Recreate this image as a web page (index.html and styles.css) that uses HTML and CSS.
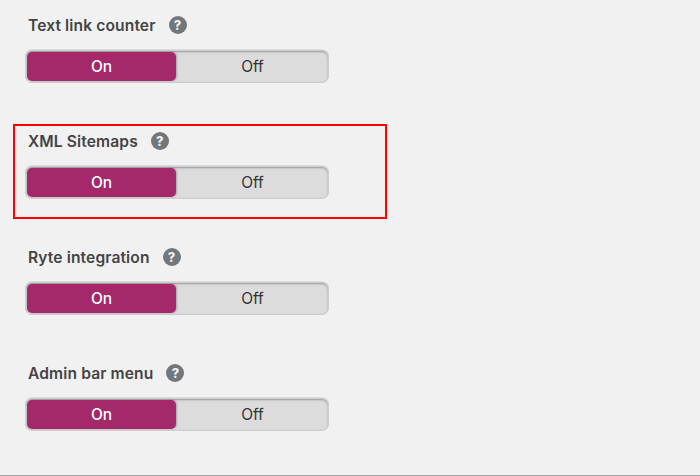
FILE: index.html
```html
<!DOCTYPE html>
<html lang="en">
<head>
  <meta charset="UTF-8" />
  <title>Features</title>
  <link rel="stylesheet" href="styles.css">
</head>
<body>
  <div class="features">
    <div class="feature">
      <div class="label">Text link counter <span class="help">?</span></div>
      <div class="toggle"><span class="opt on">On</span><span class="opt">Off</span></div>
    </div>
    <div class="feature highlighted">
      <div class="label">XML Sitemaps <span class="help">?</span></div>
      <div class="toggle"><span class="opt on">On</span><span class="opt">Off</span></div>
    </div>
    <div class="feature">
      <div class="label">Ryte integration <span class="help">?</span></div>
      <div class="toggle"><span class="opt on">On</span><span class="opt">Off</span></div>
    </div>
    <div class="feature">
      <div class="label">Admin bar menu <span class="help">?</span></div>
      <div class="toggle"><span class="opt on">On</span><span class="opt">Off</span></div>
    </div>
  </div>
</body>
</html>
```

FILE: styles.css
```css
html, body {
  height: 100%;
}
body {
  margin: 0;
  overflow: hidden;
  box-sizing: border-box;
  border-bottom: 1px solid #a6a6a6;
  background-color: #f1f1f1;
  font-family: Inter, "Liberation Sans", sans-serif;
  color: #444;
}
.features {
  padding: 15px 0 0 25px;
}
.feature {
  position: relative;
  height: 116px;
}
.highlighted::after {
  content: "";
  position: absolute;
  left: -12px;
  top: -7px;
  width: 370px;
  height: 91px;
  border: 2px solid #f00;
}
.label {
  display: flex;
  align-items: center;
  height: 20px;
  margin: 0 0 15px 3px;
  font-size: 15.6px;
  font-weight: 600;
  letter-spacing: 0.12px;
  white-space: pre;
}
.help {
  display: flex;
  align-items: center;
  justify-content: center;
  width: 18px;
  height: 18px;
  margin-left: 9px;
  border-radius: 50%;
  background-color: #72777c;
  color: #f1f1f1;
  font-size: 13px;
  font-weight: 800;
}
.toggle {
  display: flex;
  box-sizing: border-box;
  width: 304px;
  height: 33px;
  padding: 1px;
  border: 1px solid #cdcdcd;
  border-radius: 7px;
  background-color: #dcdcdc;
  box-shadow: inset 0 1px 2px rgba(0,0,0,0.3), 0 -0.5px 0 #c8c8c8;
}
.opt {
  flex: 1;
  display: flex;
  align-items: center;
  justify-content: center;
  padding-left: 2px;
  font-size: 15.5px;
  color: #333;
}
.on {
  flex: 0 0 149px;
  box-sizing: border-box;
  padding: 0;
  border-radius: 5px;
  background-color: #a4286a;
  color: #fff;
  font-weight: 500;
  box-shadow: 1px 0 2px rgba(0,0,0,0.25);
}
```
